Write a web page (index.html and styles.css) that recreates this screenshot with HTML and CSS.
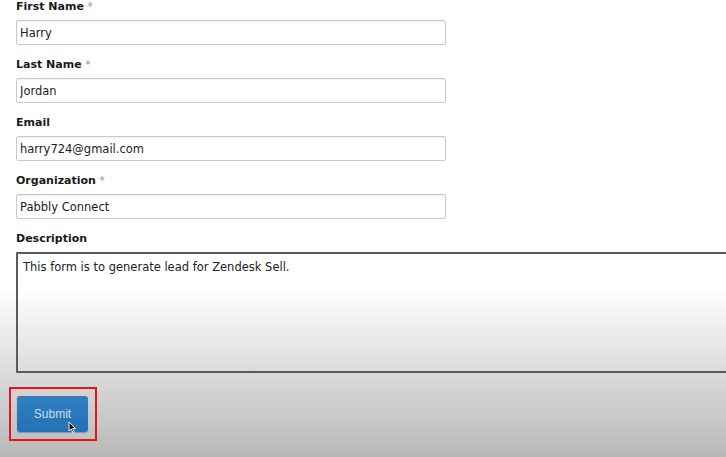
FILE: index.html
```html
<!DOCTYPE html>
<html lang="en">
<head>
    <meta charset="UTF-8">
    <meta name="viewport" content="width=device-width, initial-scale=1.0">
    <title>Lead Form</title>
    <link rel="stylesheet" href="styles.css">
</head>
<body>
    <form class="lead-form">
        <div class="field">
            <label class="field-label">First Name <span class="required">*</span></label>
            <input class="field-input" type="text" value="Harry">
        </div>
        <div class="field">
            <label class="field-label">Last Name <span class="required">*</span></label>
            <input class="field-input" type="text" value="Jordan">
        </div>
        <div class="field">
            <label class="field-label">Email</label>
            <input class="field-input" type="text" value="harry724@gmail.com">
        </div>
        <div class="field">
            <label class="field-label">Organization <span class="required">*</span></label>
            <input class="field-input" type="text" value="Pabbly Connect">
        </div>
        <div class="field">
            <label class="field-label">Description</label>
            <textarea class="field-textarea">This form is to generate lead for Zendesk Sell.</textarea>
        </div>

        <div class="submit-highlight">
            <button class="submit-button" type="button">Submit</button>
            <svg class="cursor" width="9" height="13" viewBox="0 0 9 13">
                <path d="M1 1 L1 10 L3.2 8 L5 12 L6.4 11.4 L4.7 7.6 L7.6 7.6 Z" fill="#111" stroke="#eee" stroke-width="1"/>
            </svg>
        </div>
    </form>
</body>
</html>
```

FILE: styles.css
```css
html {
    overflow: hidden;
}

body {
    margin: 0;
    height: 457px;
    background: linear-gradient(180deg, #fff 0, #fff 288px, #dcdcdc 370px, #b8b8b8 457px);
    font-family: 'DejaVu Sans', sans-serif;
    color: #222;
}

.lead-form {
    display: flex;
    flex-direction: column;
    gap: 13px;
    padding-left: 16px;
}

.field {
    display: flex;
    flex-direction: column;
    gap: 6px;
}

.field-label {
    font-size: 11px;
    font-weight: bold;
    line-height: 14px;
    color: #1a1a1a;
}

.required {
    color: #c77;
    font-weight: normal;
    font-size: 10px;
}

.field-input {
    box-sizing: border-box;
    width: 430px;
    height: 25px;
    margin: 0;
    padding: 0 3px;
    border: 1px solid #c9c9c9;
    border-radius: 2px;
    box-shadow: inset 0 1px 1px rgba(0, 0, 0, 0.06);
    font-family: 'DejaVu Sans', sans-serif;
    font-size: 11.5px;
    color: #222;
    background: #fff;
}

.field-textarea {
    box-sizing: border-box;
    width: 720px;
    height: 121px;
    margin: 0;
    padding: 5px 5px;
    border: 2px solid #5a5a5a;
    border-radius: 1px;
    background: transparent;
    font-family: 'DejaVu Sans', sans-serif;
    font-size: 11.5px;
    line-height: 16px;
    color: #222;
    resize: none;
}

.submit-highlight {
    position: relative;
    align-self: flex-start;
    margin: 1px 0 0 -7px;
    padding: 7px 7px 7px 6px;
    border: 2px solid #e8141b;
}

.submit-button {
    display: block;
    width: 71px;
    height: 36px;
    border: none;
    border-radius: 3px;
    background: linear-gradient(180deg, #2e80c2, #2671b1);
    box-shadow: 0 1px 1px rgba(0, 0, 0, 0.25);
    font-family: 'Liberation Sans', Arial, sans-serif;
    font-size: 12px;
    color: #cbdbe8;
}

.cursor {
    position: absolute;
    left: 57px;
    top: 32px;
}
```
